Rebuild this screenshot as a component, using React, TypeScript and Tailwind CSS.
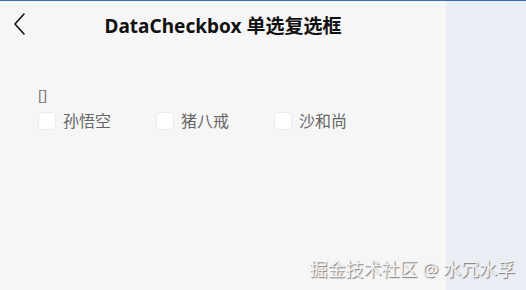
const options = ["孙悟空", "猪八戒", "沙和尚"];

const font = { fontFamily: '"Noto Sans", "Noto Sans CJK SC", sans-serif' };

export default function App() {
  return (
    <div className="w-[526px] h-[290px] flex overflow-hidden relative border-t border-[#3b6cb3]" style={font}>
      <main className="w-[446px] h-full bg-[#f6f6f6] flex flex-col">
        <header className="h-[52px] relative flex items-center justify-center">
          <svg className="absolute left-[12px] top-[11px]" width="16" height="24" viewBox="0 0 16 24" fill="none">
            <path d="M12 2 L3 12 L12 22" stroke="#111" strokeWidth="1.6" strokeLinecap="round" strokeLinejoin="round" />
          </svg>
          <h1 className="text-[19px] font-bold text-[#111] -mt-[2px]">DataCheckbox 单选复选框</h1>
        </header>
        <section className="pl-[38px] pt-[34px]">
          <div className="text-[14px] leading-[16px] text-[#777]">[]</div>
          <div className="flex mt-[6px]">
            {options.map((o) => (
              <label key={o} className="flex items-center w-[118px] text-[16px] leading-[24px] text-[#666]">
                <span className="w-[18px] h-[18px] rounded-[4px] bg-white border border-[#ececec] mr-[7px]" />
                {o}
              </label>
            ))}
          </div>
        </section>
      </main>
      <aside className="flex-1 h-full bg-[#e9eef5]" />
      <div className="absolute right-[11px] bottom-[9px] text-[18px] leading-[24px] text-[#f4f4f4] [text-shadow:1px_1px_1px_#777]">
        掘金技术社区 @ 水冗水孚
      </div>
    </div>
  );
}
